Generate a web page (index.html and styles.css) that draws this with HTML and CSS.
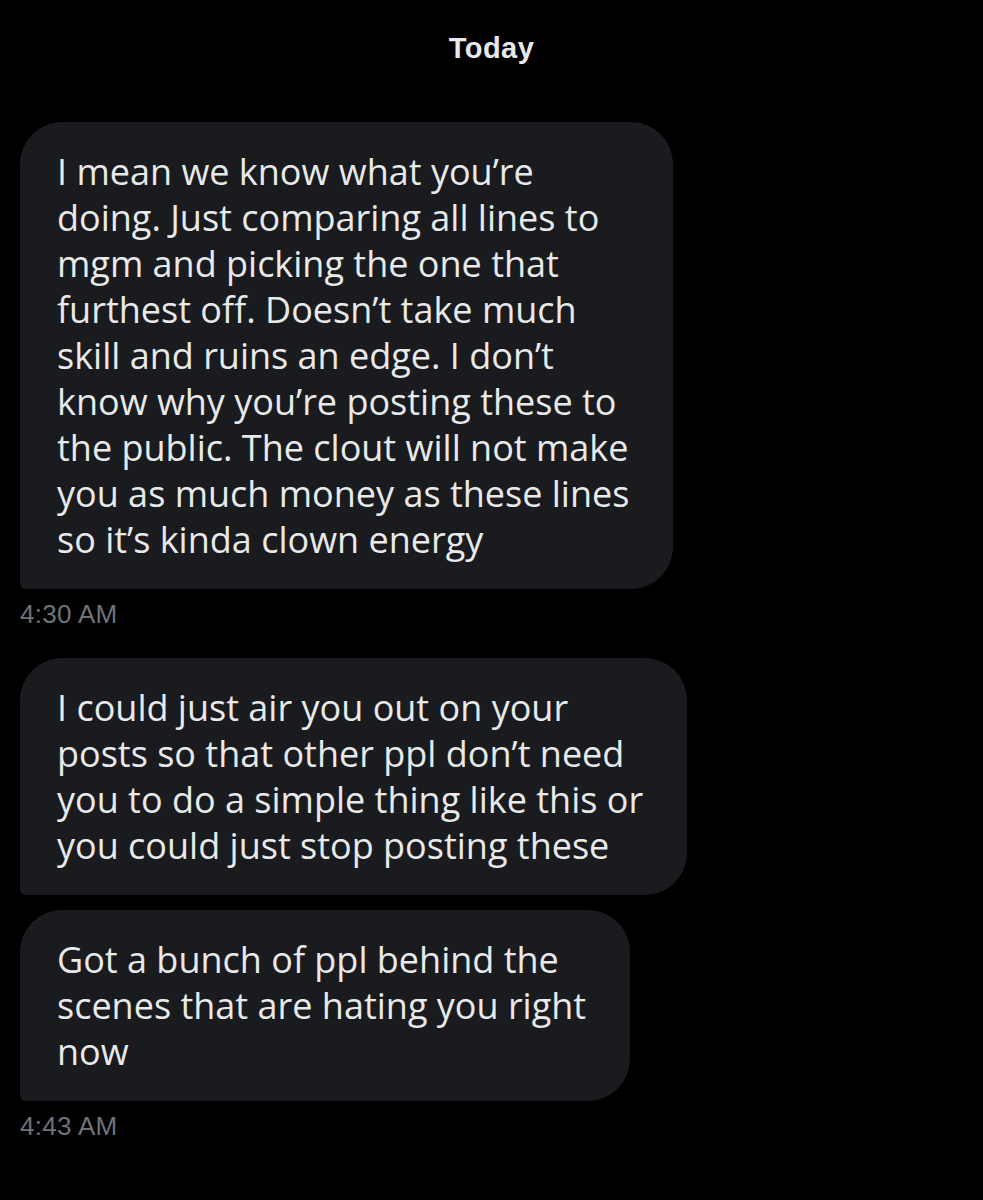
FILE: index.html
```html
<!DOCTYPE html>
<html lang="en">
<head>
    <meta charset="UTF-8">
    <meta name="viewport" content="width=device-width, initial-scale=1.0">
    <title>Messages</title>
    <link rel="stylesheet" href="styles.css">
</head>
<body>
    <div class="day-label">Today</div>

    <div class="thread">
        <div class="message-group">
            <div class="bubble">
                I mean we know what you’re<br>
                doing. Just comparing all lines to<br>
                mgm and picking the one that<br>
                furthest off. Doesn’t take much<br>
                skill and ruins an edge. I don’t<br>
                know why you’re posting these to<br>
                the public. The clout will not make<br>
                you as much money as these lines<br>
                so it’s kinda clown energy
            </div>
            <div class="timestamp">4:30 AM</div>
        </div>

        <div class="message-group">
            <div class="bubble">
                I could just air you out on your<br>
                posts so that other ppl don’t need<br>
                you to do a simple thing like this or<br>
                you could just stop posting these
            </div>
            <div class="bubble">
                Got a bunch of ppl behind the<br>
                scenes that are hating you right<br>
                now
            </div>
            <div class="timestamp">4:43 AM</div>
        </div>
    </div>
</body>
</html>
```

FILE: styles.css
```css
body {
    background-color: #000;
    color: #e7e9ea;
    font-family: 'Open Sans', sans-serif;
    margin: 0;
    padding: 0 20px;
}

.day-label {
    text-align: center;
    font-family: 'Liberation Sans', Arial, sans-serif;
    font-weight: bold;
    font-size: 29px;
    letter-spacing: 0.5px;
    line-height: 32px;
    padding-top: 32px;
    margin-bottom: 58px;
}

.thread {
    display: flex;
    flex-direction: column;
    gap: 29px;
}

.message-group {
    display: flex;
    flex-direction: column;
    align-items: flex-start;
    gap: 15px;
}

.bubble {
    background-color: #1a1b1e;
    border-radius: 42px 42px 42px 6px;
    padding: 27px 44px 26px 37px;
    font-size: 36px;
    line-height: 46px;
    white-space: nowrap;
}

.timestamp {
    margin-top: -5px;
    font-family: 'Liberation Sans', Arial, sans-serif;
    font-size: 26px;
    letter-spacing: 0.3px;
    line-height: 30px;
    color: #6e7377;
}
```
